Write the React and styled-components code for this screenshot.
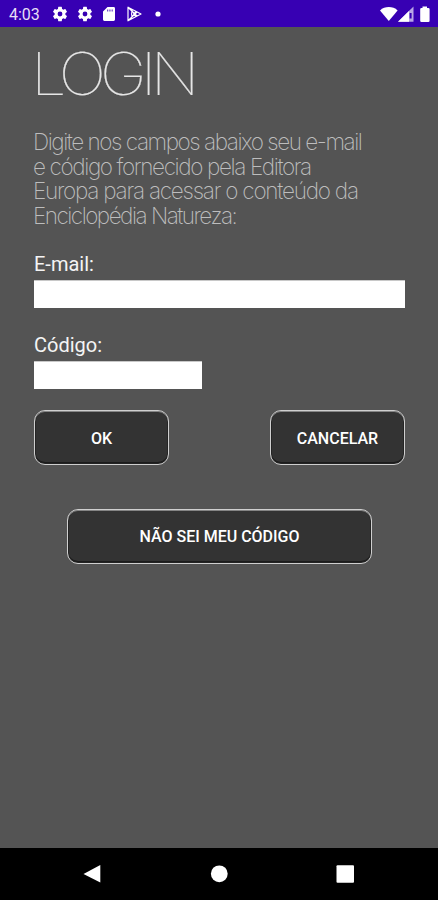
import React from "react";
import styled, { createGlobalStyle } from "styled-components";

const GlobalStyle = createGlobalStyle`
  *, *::before, *::after { box-sizing: border-box; }
  body { margin: 0; background: #545454; }
`;

const Screen = styled.div`
  width: 438px;
  height: 900px;
  display: flex;
  flex-direction: column;
  overflow: hidden;
  background: #545454;
  color: #fff;
  font-family: Roboto, "Liberation Sans", sans-serif;
`;

const StatusBar = styled.header`
  height: 27px;
  flex: none;
  display: flex;
  align-items: center;
  padding: 1px 8px 0 9px;
  background: #3700b3;
`;

const Clock = styled.time`
  width: 44px;
  padding-top: 1px;
  font-size: 16px;
  line-height: 20px;
  color: #e6dff6;
`;

const StatusIcon = styled.svg`
  display: block;
  flex: none;
  width: ${({ $w }) => $w}px;
  height: ${({ $h }) => $h}px;
  margin-left: ${({ $gap = 0 }) => $gap}px;
`;

const Spacer = styled.div`
  flex: 1;
`;

const Content = styled.main`
  flex: 1;
  padding: 0 33px 0 34px;
`;

const Title = styled.h1`
  margin: 10px 0 0 -3.5px;
  height: 72px;
  font-family: Inter, Roboto, sans-serif;
  font-weight: 100;
  font-size: 59px;
  line-height: 73px;
  letter-spacing: -5.5px;
  color: #e6e6e6;
  -webkit-text-stroke: 0.2px #e6e6e6;
  white-space: nowrap;
  transform: scaleX(1.07);
  transform-origin: left;
`;

const Intro = styled.p`
  margin: 21px 0 0 -1px;
  font-family: Inter, Roboto, sans-serif;
  font-weight: 200;
  font-size: 22.5px;
  line-height: 24.7px;
  color: #bdbdbd;
`;

const IntroLine = styled.span`
  display: block;
  white-space: nowrap;
  letter-spacing: ${({ $tracking }) => $tracking}px;
`;

const Field = styled.label`
  display: block;
  margin-top: ${({ $top }) => $top}px;
`;

const FieldLabel = styled.span`
  display: block;
  height: 28px;
  font-size: 20px;
  line-height: 24px;
  color: #f4f4f4;
`;

const Input = styled.input`
  display: block;
  width: ${({ $width }) => $width}px;
  height: 28px;
  padding: 0 4px;
  border: 0;
  border-top: 1px solid #c8c8c8;
  border-radius: 0;
  outline: 0;
  background: #fff;
`;

const Actions = styled.div`
  display: flex;
  justify-content: space-between;
  margin-top: 21px;
`;

const SecondaryAction = styled.div`
  display: flex;
  justify-content: center;
  margin-top: 44px;
`;

const Button = styled.button`
  width: ${({ $width }) => $width}px;
  height: 55px;
  padding: ${({ $drop = 3 }) => $drop}px 0 0;
  border: 1px solid #cfcfcf;
  border-radius: 11px;
  background: #333;
  box-shadow: inset 0 1px 0 #858585, inset 0 0 0 1px #242424, inset 0 -2px 0 #1c1c1c;
  color: #fff;
  font-family: inherit;
  font-weight: 500;
  font-size: 16px;
`;

const NavBar = styled.nav`
  height: 52px;
  flex: none;
  display: flex;
  align-items: center;
  background: #000;
`;

const NavIcon = styled.svg`
  display: block;
  width: 438px;
  height: 52px;
`;

const GEAR =
  "M19.14 12.94c.04-.3.06-.61.06-.94s-.02-.64-.07-.94l2.03-1.58a.49.49 0 0 0 .12-.61l-1.92-3.32a.49.49 0 0 0-.59-.22l-2.39.96a7 7 0 0 0-1.62-.94l-.36-2.54a.48.48 0 0 0-.48-.41h-3.84a.48.48 0 0 0-.47.41l-.36 2.54c-.59.24-1.13.57-1.62.94l-2.39-.96a.48.48 0 0 0-.59.22L2.74 8.87a.48.48 0 0 0 .12.61l2.03 1.58a6 6 0 0 0-.02 1.88l-2.03 1.58a.49.49 0 0 0-.12.61l1.92 3.32c.12.22.37.29.59.22l2.39-.96c.5.38 1.03.7 1.62.94l.36 2.54c.05.24.24.41.48.41h3.84c.24 0 .44-.17.47-.41l.36-2.54a7 7 0 0 0 1.62-.94l2.39.96c.22.08.47 0 .59-.22l1.92-3.32a.48.48 0 0 0-.12-.61zM12 15.2a3.2 3.2 0 1 1 0-6.4 3.2 3.2 0 0 1 0 6.4z";

const Gear = ({ gap }) => (
  <StatusIcon $w={18} $h={18} $gap={gap} viewBox="0 0 24 24" aria-hidden="true">
    <path d={GEAR} fill="#fff" />
  </StatusIcon>
);

export default function App() {
  return (
    <>
      <GlobalStyle />
      <Screen>
        <StatusBar>
          <Clock>4:03</Clock>
          <Gear gap={-2} />
          <Gear gap={7} />
          <StatusIcon $w={12} $h={14} $gap={9} viewBox="0 0 12 14" aria-hidden="true">
            <path
              fill="#fff"
              fillRule="evenodd"
              d="M4.5 0H10.6Q12 0 12 1.4V12.6Q12 14 10.6 14H1.4Q0 14 0 12.6V4.5ZM4.3 2.5V4.5H5.2V2.5ZM6.5 2.5V4.5H7.4V2.5ZM8.7 2.5V4.5H9.6V2.5Z"
            />
          </StatusIcon>
          <StatusIcon $w={15} $h={16} $gap={12} viewBox="0 0 15 16" aria-hidden="true">
            <path
              d="M1 1.2V14.8L14 8ZM1 1.2L10 10M1 14.8L10 6M5.2 4L4.6 8L5.2 12M9 5.6L6.6 8L9 10.4"
              fill="none"
              stroke="#fff"
              strokeWidth="1.2"
              strokeLinejoin="round"
            />
          </StatusIcon>
          <StatusIcon $w={6} $h={6} $gap={13} viewBox="0 0 6 6" aria-hidden="true">
            <circle cx="3" cy="3" r="2.6" fill="#fff" />
          </StatusIcon>
          <Spacer />
          <StatusIcon $w={50} $h={17} viewBox="0 0 50 17" aria-hidden="true">
            <path d="M0 4.4C4.8 0 12.8 0 17.6 4.4L8.8 15Z" fill="#fff" />
            <path d="M33.5 .6V15.8H18Z" fill="#b9a6e6" />
            <path d="M29 5V15.8H18Z" fill="#fff" />
            <path d="M29.6 7H31.6V12.5H29.6Z" fill="#3700b3" />
            <path d="M42.5 .5H47V1.9H48.3Q49.6 1.9 49.6 3.2V14.7Q49.6 16 48.3 16H41.5Q40.2 16 40.2 14.7V3.2Q40.2 1.9 41.5 1.9H42.5Z" fill="#fff" />
          </StatusIcon>
        </StatusBar>

        <Content>
          <Title>LOGIN</Title>
          <Intro>
            <IntroLine $tracking={-1.45}>Digite nos campos abaixo seu e-mail </IntroLine>
            <IntroLine $tracking={-1.37}>e código fornecido pela Editora </IntroLine>
            <IntroLine $tracking={-1.23}>Europa para acessar o conteúdo da </IntroLine>
            <IntroLine $tracking={-1.5}>Enciclopédia Natureza:</IntroLine>
          </Intro>
          <Field $top={23}>
            <FieldLabel>E-mail:</FieldLabel>
            <Input type="email" $width={371} />
          </Field>
          <Field $top={25}>
            <FieldLabel>Código:</FieldLabel>
            <Input type="text" $width={168} />
          </Field>
          <Actions>
            <Button $width={135}>OK</Button>
            <Button $width={135}>CANCELAR</Button>
          </Actions>
          <SecondaryAction>
            <Button $width={305} $drop={1}>NÃO SEI MEU CÓDIGO</Button>
          </SecondaryAction>
        </Content>

        <NavBar>
          <NavIcon viewBox="0 0 438 52" aria-hidden="true">
            <path d="M83.5 26L100.3 17V34.6Z" fill="#fff" />
            <circle cx="219.3" cy="25.8" r="8.4" fill="#fff" />
            <rect x="336.5" y="17.3" width="17.5" height="17.5" rx="1" fill="#fff" />
          </NavIcon>
        </NavBar>
      </Screen>
    </>
  );
}
